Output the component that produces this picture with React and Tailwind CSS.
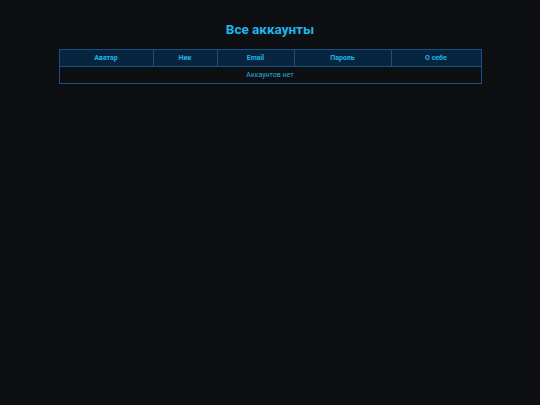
export default function App() {
  const cols = [
    { label: "Аватар", w: "w-[94px]" },
    { label: "Ник", w: "w-[64px]" },
    { label: "Email", w: "w-[77px]" },
    { label: "Пароль", w: "w-[97px]" },
    { label: "О себе", w: "w-[90px]" },
  ];

  return (
    <div className="min-h-[405px] w-full bg-[#0e0f13] font-['Roboto',sans-serif] pt-[20px]">
      <h1 className="text-center text-[13.5px] leading-[18px] font-bold text-[#1fb6e8]">Все аккаунты</h1>
      <div className="mt-[11px] flex justify-center">
        <table className="w-[422px] border-collapse table-fixed border border-[#1b4f86]">
          <thead>
            <tr className="bg-[#082540]">
              {cols.map((c) => (
                <th
                  key={c.label}
                  className={`${c.w} h-[17px] border border-[#1b4f86] p-0 text-center text-[7px] font-bold text-[#1fb6e8]`}
                >
                  {c.label}
                </th>
              ))}
            </tr>
          </thead>
          <tbody>
            <tr>
              <td colSpan={5} className="h-[17px] border border-[#1b4f86] p-0 text-center text-[7px] text-[#20b0e0]">
                Аккаунтов нет
              </td>
            </tr>
          </tbody>
        </table>
      </div>
    </div>
  );
}
